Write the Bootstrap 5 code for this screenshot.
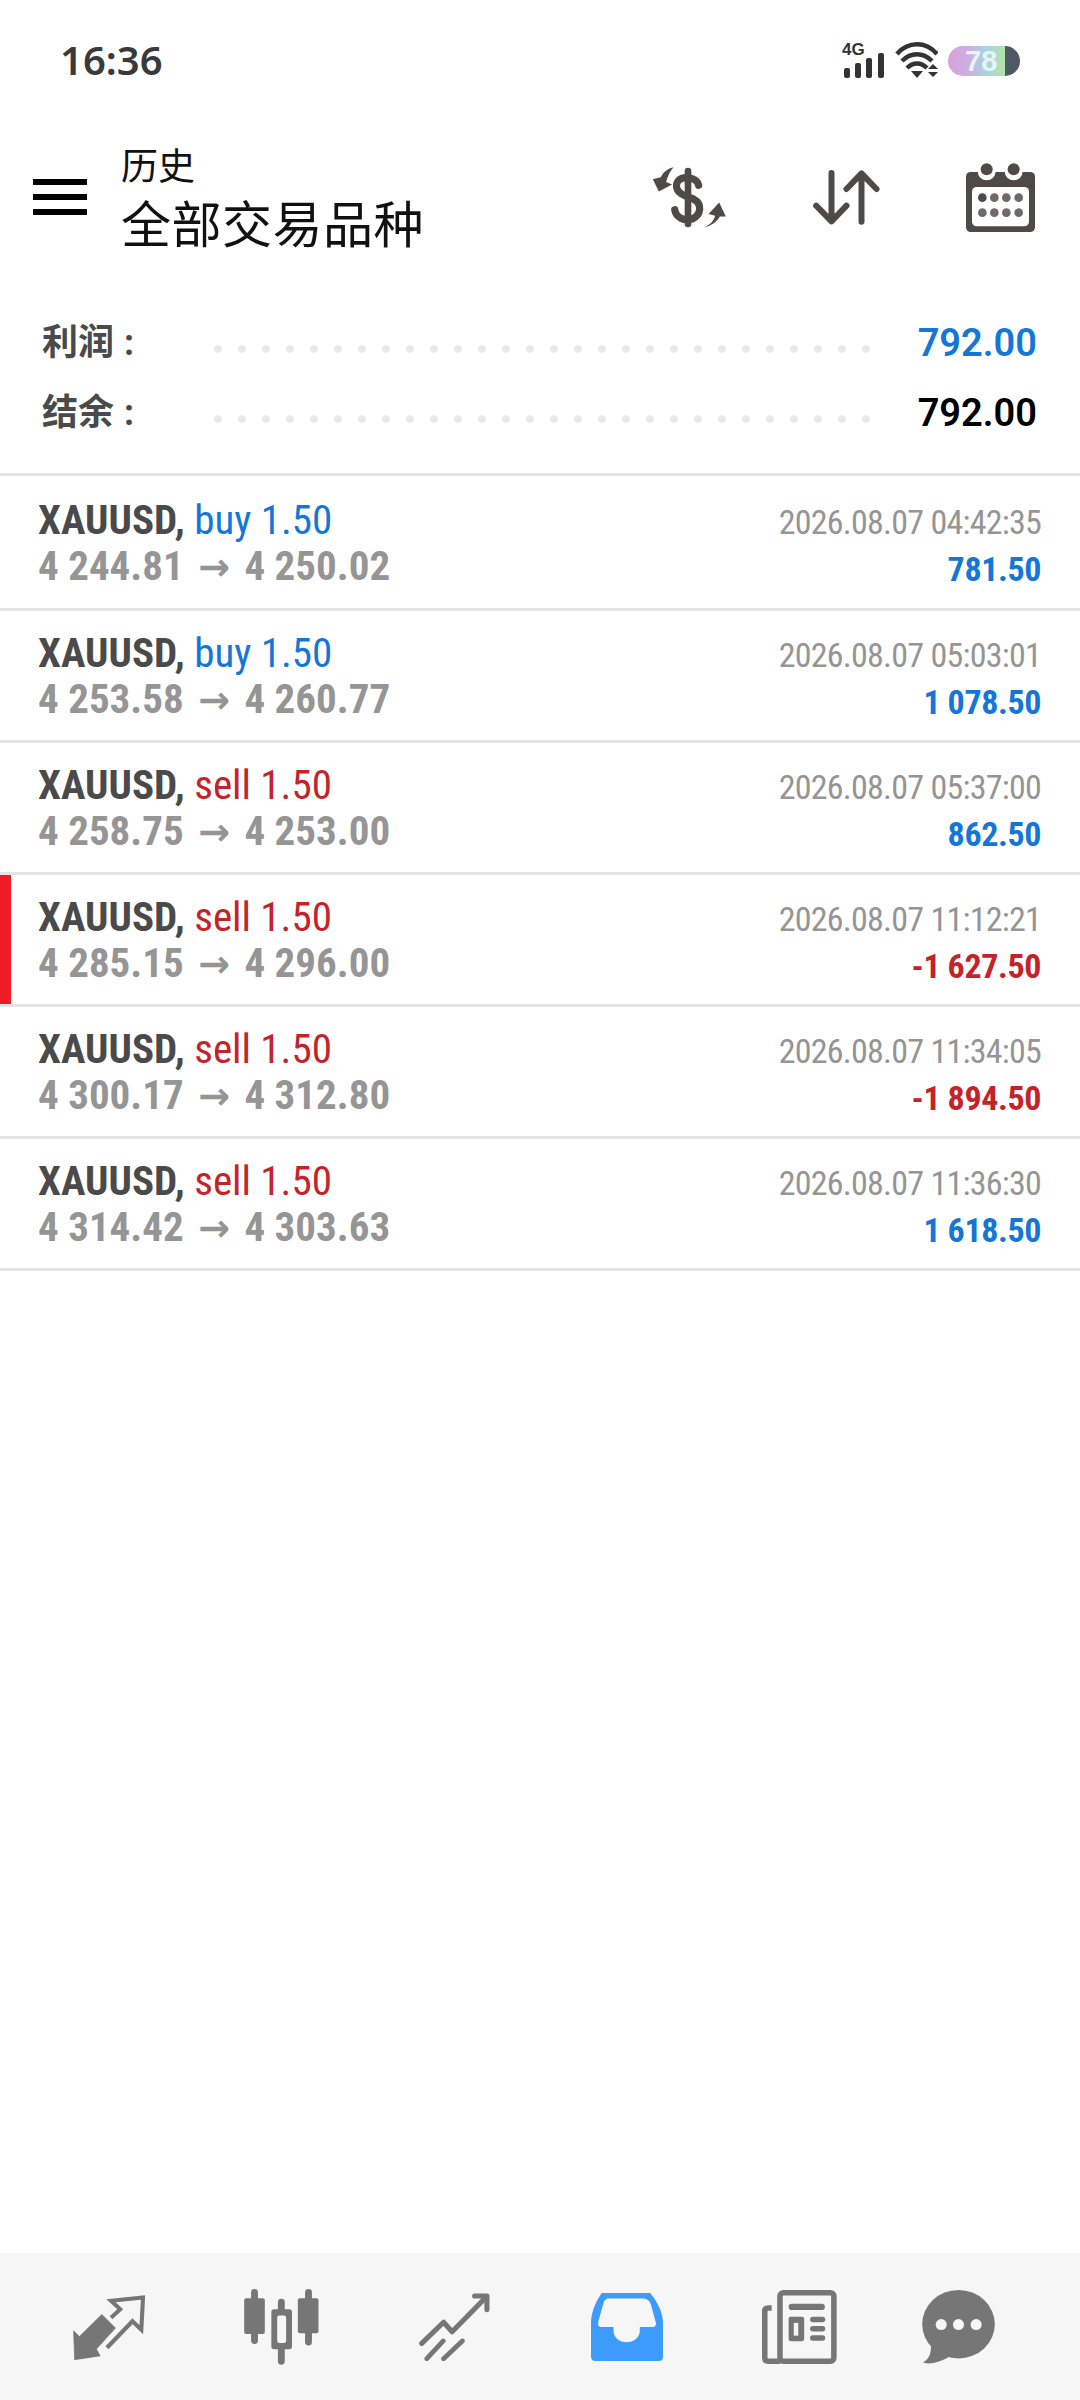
<!DOCTYPE html>
<html lang="zh">
<head>
    <meta charset="UTF-8">
    <meta name="viewport" content="width=device-width, initial-scale=1.0">
    <title>历史</title>
    <link href="https://cdn.jsdelivr.net/npm/bootstrap@5.3.0/dist/css/bootstrap.min.css" rel="stylesheet">
    <style>
        body {
            background: #fff;
            font-family: "Roboto", "Noto Sans CJK SC", sans-serif;
        }
        .screen {
            width: 1080px;
            height: 2400px;
        }
        .status-bar {
            height: 120px;
            padding: 30px 60px 0;
        }
        .clock {
            font-family: "Noto Sans", sans-serif;
            font-size: 40px;
            font-weight: 600;
            line-height: 40px;
            margin-top: 10px;
            color: #3a3a3a;
        }
        .status-icons {
            gap: 10px;
            margin-top: 2px;
            margin-left: auto;
        }
        .batt {
            width: 72px;
            height: 30px;
            border-radius: 15px;
            overflow: hidden;
            background: linear-gradient(90deg, #dc9fdc 0%, #c9b0e0 30%, #a5d8e0 55%, #b4e2a4 79%, #4d5a66 79%);
            color: #e8f3f7;
            font: 700 29px/30px "Liberation Sans", sans-serif;
            padding-left: 17px;
        }
        .top-head {
            height: 144px;
            padding: 10px 45px 0 33px;
        }
        .menu-bars {
            width: 54px;
            height: 36px;
            border-top: 6px solid #000;
            border-bottom: 6px solid #000;
            background: linear-gradient(#000, #000) center / 100% 6px no-repeat;
            margin-right: 34px;
        }
        .title-wrap {
            margin-top: 16px;
        }
        .title-small {
            font-size: 37px;
            line-height: 44px;
            color: #111;
        }
        .title-big {
            font-size: 50px;
            line-height: 60px;
            letter-spacing: .5px;
            margin-top: 6px;
            color: #111;
        }
        .head-icons {
            margin-left: auto;
            gap: 86px;
        }
        .sum-wrap {
            height: 212px;
            padding: 44px 43px 0 42px;
            border-bottom: 3px solid #e4e4e4;
        }
        .sum-line {
            height: 70px;
        }
        .sum-label {
            width: 164px;
            font-size: 36px;
            font-weight: 700;
            color: #4a4a4a;
        }
        .sum-colon {
            margin-left: 10px;
        }
        .sum-dots {
            width: 672px;
            height: 8px;
            margin-top: 12px;
            background: radial-gradient(circle, #e8e8e8 3.5px, transparent 4px) left center / 24px 8px repeat-x;
        }
        .sum-val {
            margin-left: auto;
            font-size: 38px;
            font-weight: 600;
            color: #000;
        }
        .trade-row {
            height: 132px;
            padding: 19px 39px 0 38px;
            border-bottom: 3px solid #e4e4e4;
            font-family: "Roboto Condensed", "Liberation Sans Narrow", "Roboto", sans-serif;
        }
        .trade-row.first-row {
            height: 135px;
            padding-top: 21px;
        }
        .trade-row.marked {
            box-shadow: inset 11px 0 0 #ee1c25;
        }
        .sym-line {
            font-size: 41px;
            line-height: 47px;
            color: #4a4a4a;
        }
        .price-line {
            font-size: 41px;
            line-height: 45px;
            font-weight: 700;
            color: #959595;
        }
        .price-arrow {
            font-family: "DejaVu Sans", sans-serif;
            font-size: 38px;
            font-weight: 700;
            margin: 0 5px;
        }
        .trade-right {
            margin-top: 2px;
        }
        .trade-time {
            font-size: 34px;
            line-height: 47px;
            letter-spacing: -.75px;
            color: #959595;
        }
        .trade-pl {
            font-size: 34px;
            line-height: 47px;
            letter-spacing: -.4px;
            font-weight: 700;
        }
        .c-blue { color: #1477d8; }
        .c-red { color: #c5232a; }
        .tab-bar {
            height: 147px;
            padding-left: 23px;
            background: #f6f6f6;
        }
        .tab-item {
            width: 172.6px;
        }
        .tab-last {
            margin-right: 28px;
        }
    </style>
</head>
<body>
<div class="screen d-flex flex-column">
    <div class="status-bar d-flex align-items-start">
        <span class="clock">16:36</span>
        <div class="status-icons d-flex align-items-center">
            <svg width="96" height="58" viewBox="842 32 96 58">
                <text x="842" y="55" font-family="Liberation Sans" font-weight="700" font-size="17" fill="#333">4G</text>
                <g fill="#333">
                    <rect x="844" y="68" width="6" height="10" rx="2"/>
                    <rect x="855" y="63" width="6" height="15" rx="2"/>
                    <rect x="866" y="58" width="6" height="20" rx="2"/>
                    <rect x="878" y="53" width="6" height="25" rx="2"/>
                </g>
                <g fill="none" stroke="#333" stroke-width="4.5">
                    <path d="M897 54 C908 41 926 41 937 54"/>
                    <path d="M902 61 C911 52 923 52 932 61"/>
                    <path d="M907 68 C913 62 921 62 927 68"/>
                </g>
                <path d="M911 71 H923 L917 78Z" fill="#333"/>
                <path d="M928 69 L933 64 L938 69Z M928 72 H938 L933 77Z" fill="#333"/>
            </svg>
            <div class="batt">78</div>
        </div>
    </div>

    <div class="top-head d-flex align-items-center">
        <div class="menu-bars"></div>
        <div class="title-wrap align-self-start">
            <div class="title-small">历史</div>
            <div class="title-big">全部交易品种</div>
        </div>
        <div class="head-icons d-flex align-items-center">
            <svg width="75" height="63" viewBox="160 500 225 190">
                <g fill="none" stroke="#4f4a4a" stroke-linecap="round">
                    <path d="M268 515 V675" stroke-width="20"/>
                    <path d="M300 558 C296 538 268 532 250 537 C226 546 226 578 260 590 L285 600 C312 614 308 648 280 660 C256 666 232 656 228 632" stroke-width="22"/>
                </g>
                <path d="M224 504 C202 510 192 522 186 534 L162 540 L180 577 L220 556 L202 548 C206 532 214 516 224 504Z M316 684 C335 678 345 666 350 650 L330 645 L362 610 L382 652 L364 652 C356 668 336 682 316 684Z" fill="#4f4a4a"/>
            </svg>
            <svg width="67" height="56" viewBox="638 510 200 168">
                <path d="M693 522 V665 M647 620 L693 667 L738 620 M783 668 V525 M738 570 L783 523 L828 570" fill="none" stroke="#4f4a4a" stroke-width="18" stroke-linecap="round" stroke-linejoin="round"/>
            </svg>
            <svg width="69" height="69" viewBox="1098 485 207 207">
                <rect x="1098" y="512" width="207" height="180" rx="14" fill="#4f4a4a"/>
                <circle cx="1160" cy="510" r="27" fill="#fff"/>
                <circle cx="1241" cy="510" r="27" fill="#fff"/>
                <circle cx="1160" cy="504" r="18" fill="#4f4a4a"/>
                <circle cx="1241" cy="504" r="18" fill="#4f4a4a"/>
                <rect x="1116" y="557" width="171" height="118" rx="14" fill="#fff"/>
                <g fill="#6d6a6a">
                    <circle cx="1147" cy="589" r="13" fill="#4f4a4a"/>
                    <circle cx="1183" cy="589" r="13"/>
                    <circle cx="1219" cy="589" r="13"/>
                    <circle cx="1256" cy="589" r="13"/>
                    <circle cx="1147" cy="634" r="13"/>
                    <circle cx="1183" cy="634" r="13"/>
                    <circle cx="1219" cy="634" r="13"/>
                    <circle cx="1256" cy="634" r="13"/>
                </g>
            </svg>
        </div>
    </div>

    <div class="sum-wrap">
        <div class="sum-line d-flex align-items-center">
            <span class="sum-label">利润<span class="sum-colon">:</span></span>
            <span class="sum-dots"></span>
            <span class="sum-val c-blue">792.00</span>
        </div>
        <div class="sum-line d-flex align-items-center">
            <span class="sum-label">结余<span class="sum-colon">:</span></span>
            <span class="sum-dots"></span>
            <span class="sum-val">792.00</span>
        </div>
    </div>

    <div id="trades"></div>

    <div class="tab-bar d-flex align-items-center mt-auto">
        <div class="tab-item d-flex justify-content-center">
            <svg width="72" height="66" viewBox="214 160 210 194">
                <path d="M298 220 L338 260 L282 322 L293 342 L218 353 L215 268 L232 285Z" fill="#767676" stroke="#767676" stroke-width="2" stroke-linejoin="round"/>
                <path d="M325 230 L352 205 L325 180 L419 170 L414 265 L388 240 L313 318" fill="none" stroke="#767676" stroke-width="12"/>
            </svg>
        </div>
        <div class="tab-item d-flex justify-content-center">
            <svg width="75" height="76" viewBox="709 148 217 221">
                <g fill="#767676">
                    <rect x="709" y="175" width="60" height="104" rx="6"/>
                    <rect x="865" y="175" width="60" height="102" rx="6"/>
                    <path fill-rule="evenodd" d="M796 207 H840 Q848 207 848 215 V315 Q848 323 840 323 H796 Q788 323 788 315 V215 Q788 207 796 207Z M811 225 Q805 225 805 231 V299 Q805 305 811 305 H825 Q831 305 831 299 V231 Q831 225 825 225Z"/>
                </g>
                <path d="M739 158 V298 M896 158 V302 M817 186 V207 M817 323 V358" fill="none" stroke="#767676" stroke-width="20" stroke-linecap="round"/>
            </svg>
        </div>
        <div class="tab-item d-flex justify-content-center">
            <svg width="71" height="68" viewBox="1213 155 208 198">
                <g fill="none" stroke="#767676" stroke-linecap="round" stroke-linejoin="round">
                    <path d="M1221 302 L1285 240 L1310 268 L1410 166" stroke-width="15"/>
                    <path d="M1376 163 L1412 163 L1412 203" stroke-width="15"/>
                    <path d="M1236 347 L1284 295 M1285 347 L1340 295" stroke-width="14"/>
                </g>
            </svg>
        </div>
        <div class="tab-item d-flex justify-content-center">
            <svg width="72" height="68" viewBox="147 157 208 196">
                <path d="M178 157 H318 C345 190 355 220 355 245 V340 Q355 353 342 353 H160 Q147 353 147 340 V245 C147 220 155 190 178 157Z" fill="#3d9bfc"/>
                <path d="M195 173 H300 Q315 175 320 190 L335 245 Q335 255 325 255 H288 V265 C288 310 212 310 212 265 V255 H175 Q165 255 168 240 L182 190 Q185 175 195 173Z" fill="#f6f6f6"/>
            </svg>
        </div>
        <div class="tab-item d-flex justify-content-center">
            <svg width="75" height="74" viewBox="647 148 217 214">
                <g fill="none" stroke="#767676">
                    <rect x="699" y="156" width="156" height="198" rx="10" stroke-width="16"/>
                    <path d="M675 200 H665 Q655 200 655 210 V345 Q655 354 665 354 H700" stroke-width="16"/>
                    <path d="M733 197 H820" stroke-width="18" stroke-linecap="round"/>
                    <path d="M794 233 H822 M794 260 H822 M794 287 H822" stroke-width="16" stroke-linecap="round"/>
                </g>
                <rect x="724" y="225" width="45" height="71" rx="6" fill="#767676"/>
                <rect x="739" y="243" width="13" height="37" fill="#f6f6f6"/>
            </svg>
        </div>
        <div class="tab-item d-flex justify-content-center">
            <svg class="tab-last" width="73" height="74" viewBox="1108 148 210 214">
                <ellipse cx="1213" cy="247" rx="105" ry="99" fill="#767676"/>
                <path d="M1133 300 C1136 335 1125 350 1110 358 C1130 365 1165 355 1190 338Z" fill="#767676"/>
                <g fill="#f6f6f6">
                    <circle cx="1163" cy="248" r="16"/>
                    <circle cx="1213" cy="248" r="16"/>
                    <circle cx="1264" cy="248" r="16"/>
                </g>
            </svg>
        </div>
    </div>
</div>

<script>
    const trades = [
        ['buy', '4 244.81', '4 250.02', '2026.08.07 04:42:35', '781.50'],
        ['buy', '4 253.58', '4 260.77', '2026.08.07 05:03:01', '1 078.50'],
        ['sell', '4 258.75', '4 253.00', '2026.08.07 05:37:00', '862.50'],
        ['sell', '4 285.15', '4 296.00', '2026.08.07 11:12:21', '-1 627.50'],
        ['sell', '4 300.17', '4 312.80', '2026.08.07 11:34:05', '-1 894.50'],
        ['sell', '4 314.42', '4 303.63', '2026.08.07 11:36:30', '1 618.50']
    ];
    document.getElementById('trades').innerHTML = trades.map((t, i) => `
        <div class="trade-row d-flex justify-content-between ${i === 0 ? 'first-row' : ''} ${i === 3 ? 'marked' : ''}">
            <div>
                <div class="sym-line"><b>XAUUSD,</b> <span class="${t[0] === 'buy' ? 'c-blue' : 'c-red'}">${t[0]} 1.50</span></div>
                <div class="price-line">${t[1]} <span class="price-arrow">→</span> ${t[2]}</div>
            </div>
            <div class="trade-right text-end">
                <div class="trade-time">${t[3]}</div>
                <div class="trade-pl ${t[4][0] === '-' ? 'c-red' : 'c-blue'}">${t[4]}</div>
            </div>
        </div>`).join('');
</script>
<script src="https://cdn.jsdelivr.net/npm/bootstrap@5.3.0/dist/js/bootstrap.bundle.min.js"></script>
</body>
</html>
